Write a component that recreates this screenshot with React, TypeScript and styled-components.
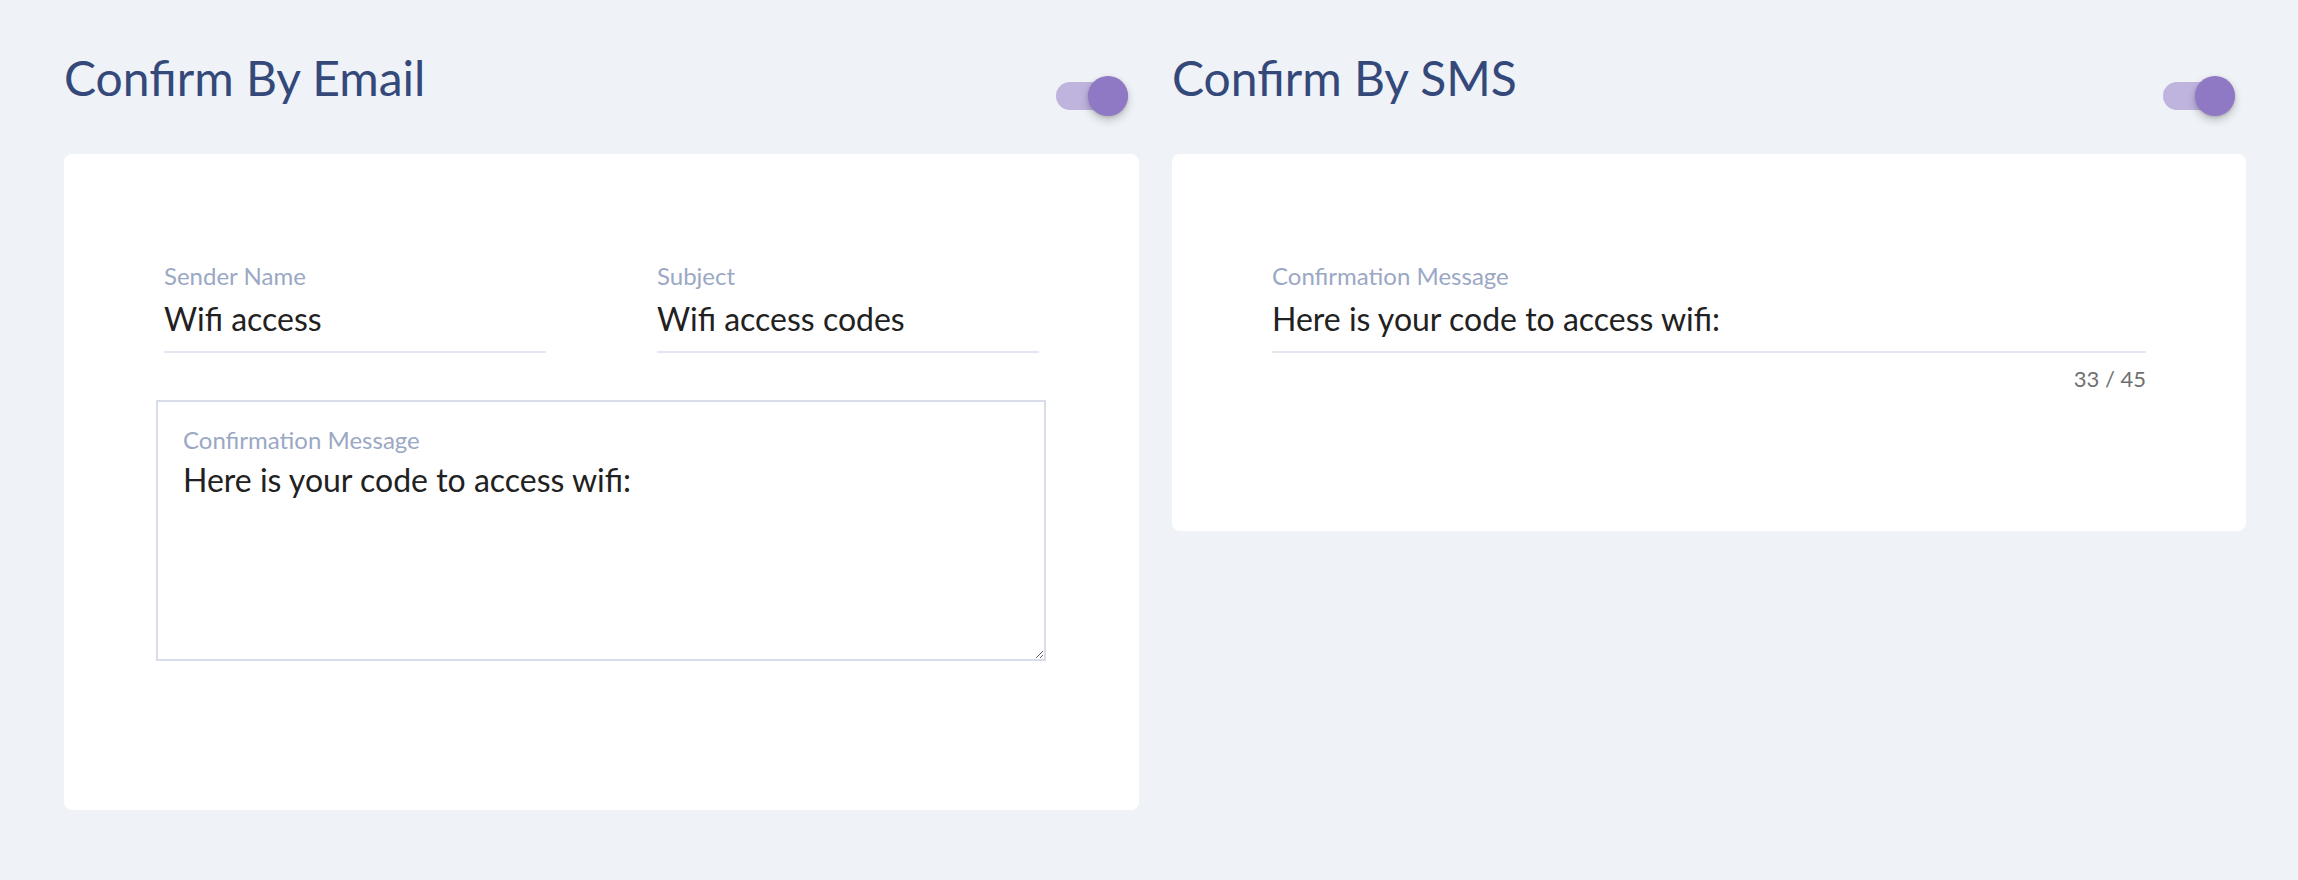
import React, { useState } from "react";
import styled, { createGlobalStyle } from "styled-components";

const GlobalStyle = createGlobalStyle`
  body {
    margin: 0;
    background-color: #eff2f7;
    font-family: Lato, "Open Sans", sans-serif;
  }
`;

const Page = styled.div`
  display: grid;
  grid-template-columns: 1075px 1074px;
  column-gap: 33px;
  padding: 0 52px 0 64px;
  min-height: 880px;
  box-sizing: border-box;
`;

const Section = styled.section`
  display: flex;
  flex-direction: column;
  align-items: stretch;
`;

const Header = styled.div`
  height: 154px;
  display: flex;
  justify-content: space-between;
  align-items: flex-start;
  padding-top: 50px;
  box-sizing: border-box;
`;

const Title = styled.h2`
  margin: 0;
  font-size: 48px;
  line-height: 56px;
  font-weight: 400;
  color: #34497a;
`;

const SwitchWrap = styled.div`
  position: relative;
  width: 72px;
  height: 40px;
  margin-top: 26px;
  margin-right: 11px;
  cursor: pointer;
`;

const SwitchTrack = styled.div<{ $on: boolean }>`
  position: absolute;
  left: 0;
  top: 6px;
  width: 72px;
  height: 28px;
  border-radius: 14px;
  background-color: ${(p) => (p.$on ? "#bfb4de" : "#c9cfdb")};
`;

const SwitchThumb = styled.div<{ $on: boolean }>`
  position: absolute;
  top: 0;
  left: ${(p) => (p.$on ? "32px" : "0")};
  width: 40px;
  height: 40px;
  border-radius: 50%;
  background-color: ${(p) => (p.$on ? "#8f78c4" : "#fafafa")};
  box-shadow: 0 4px 8px rgba(0, 0, 0, 0.22), 0 1px 3px rgba(0, 0, 0, 0.12);
  transition: left 0.2s;
`;

const Card = styled.div<{ $bottom: number }>`
  background-color: #fff;
  border-radius: 8px;
  padding: 108px 100px ${(p) => p.$bottom}px;
`;

const FieldRow = styled.div`
  display: grid;
  grid-template-columns: 382px 382px;
  justify-content: space-between;
`;

const Field = styled.div`
  display: flex;
  flex-direction: column;
`;

const Label = styled.label`
  font-size: 24px;
  line-height: 28px;
  color: #9ba8c4;
`;

const Input = styled.input`
  box-sizing: border-box;
  margin-top: 8px;
  padding: 0 0 13px;
  border: none;
  border-bottom: 2px solid #e3e7f0;
  outline: none;
  background: transparent;
  font-family: inherit;
  font-size: 32px;
  line-height: 40px;
  height: 55px;
  color: #212121;
`;

const Counter = styled.div`
  margin-top: 12px;
  text-align: right;
  font-size: 22px;
  line-height: 28px;
  color: #6f6f6f;
`;

const AreaBox = styled.div`
  margin: 47px -7px 0 -8px;
  height: 261px;
  box-sizing: border-box;
  border: 2px solid #d8dde9;
  padding: 24px 0 0 25px;
  display: flex;
  flex-direction: column;
`;

const TextArea = styled.textarea`
  flex: 1;
  margin-top: 6px;
  padding: 0;
  border: none;
  outline: none;
  resize: vertical;
  font-family: inherit;
  font-size: 32px;
  line-height: 40px;
  color: #212121;
  background: transparent;
`;

const Switch = ({ on, onToggle }: { on: boolean; onToggle: () => void }) => (
  <SwitchWrap onClick={onToggle}>
    <SwitchTrack $on={on} />
    <SwitchThumb $on={on} />
  </SwitchWrap>
);

const App = () => {
  const [byEmail, setByEmail] = useState(true);
  const [bySms, setBySms] = useState(true);
  const [sender, setSender] = useState("Wifi access");
  const [subject, setSubject] = useState("Wifi access codes");
  const [emailMsg, setEmailMsg] = useState("Here is your code to access wifi:");
  const [smsMsg, setSmsMsg] = useState("Here is your code to access wifi:");

  return (
    <>
      <GlobalStyle />
      <Page>
        <Section>
          <Header>
            <Title>Confirm By Email</Title>
            <Switch on={byEmail} onToggle={() => setByEmail((v) => !v)} />
          </Header>
          <Card $bottom={149}>
            <FieldRow>
              <Field>
                <Label>Sender Name</Label>
                <Input value={sender} onChange={(e) => setSender(e.target.value)} />
              </Field>
              <Field>
                <Label>Subject</Label>
                <Input value={subject} onChange={(e) => setSubject(e.target.value)} />
              </Field>
            </FieldRow>
            <AreaBox>
              <Label>Confirmation Message</Label>
              <TextArea value={emailMsg} onChange={(e) => setEmailMsg(e.target.value)} />
            </AreaBox>
          </Card>
        </Section>
        <Section>
          <Header>
            <Title>Confirm By SMS</Title>
            <Switch on={bySms} onToggle={() => setBySms((v) => !v)} />
          </Header>
          <Card $bottom={138}>
            <Field>
              <Label>Confirmation Message</Label>
              <Input
                value={smsMsg}
                maxLength={45}
                onChange={(e) => setSmsMsg(e.target.value)}
              />
              <Counter>
                {smsMsg.length} / 45
              </Counter>
            </Field>
          </Card>
        </Section>
      </Page>
    </>
  );
};

export default App;
